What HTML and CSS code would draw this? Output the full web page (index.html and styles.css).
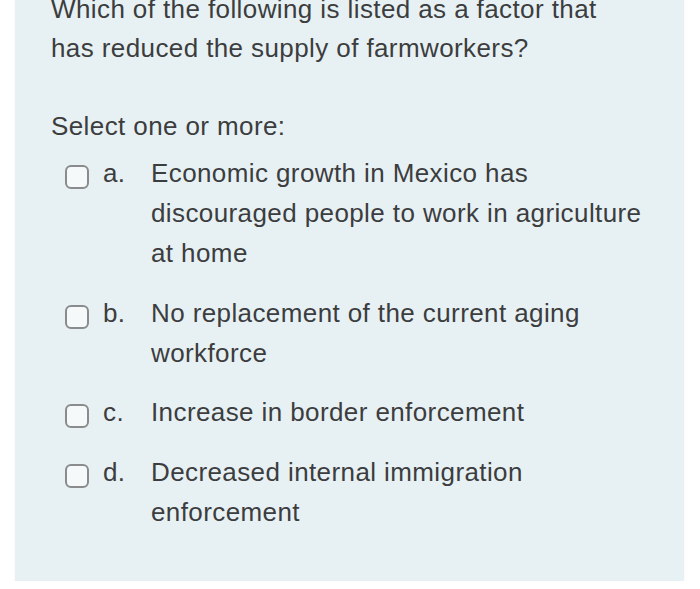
FILE: index.html
```html
<!DOCTYPE html>
<html>
<head>
<meta charset="utf-8">
<link rel="stylesheet" href="styles.css">
</head>
<body>
<div class="panel">
  <div class="question">Which of the following is listed as a factor that<br>has reduced the supply of farmworkers?</div>
  <div class="prompt">Select one or more:</div>
  <div class="options">
    <div class="option"><span class="box"></span><span class="letter">a.</span><span class="text">Economic growth in Mexico has discouraged people to work in agriculture at home</span></div>
    <div class="option"><span class="box"></span><span class="letter">b.</span><span class="text">No replacement of the current aging workforce</span></div>
    <div class="option"><span class="box"></span><span class="letter">c.</span><span class="text">Increase in border enforcement</span></div>
    <div class="option"><span class="box"></span><span class="letter">d.</span><span class="text">Decreased internal immigration enforcement</span></div>
  </div>
</div>
</body>
</html>
```
FILE: styles.css
```css
html, body { margin: 0; padding: 0; background: #ffffff; }
body {
  font-family: "Liberation Sans", Arial, sans-serif;
  color: #3c3d3e;
  font-size: 26px;
  letter-spacing: 0.4px;
}
.panel {
  margin: -20px 0 0 15px;
  width: 669px;
  background: #e7f1f4;
  padding: 10px 0 49px 36px;
  box-sizing: border-box;
  box-shadow: 0 1px 2px rgba(0,0,0,0.06);
}
.question { line-height: 39px; }
.prompt { line-height: 40px; margin-top: 38px; }
.options {
  display: flex;
  flex-direction: column;
  gap: 19.5px;
  margin-top: 7px;
  padding-left: 14px;
}
.option { display: flex; align-items: flex-start; line-height: 40px; }
.box {
  flex: none;
  width: 24px;
  height: 24px;
  box-sizing: border-box;
  border: 2.5px solid #8a8b8c;
  border-radius: 6px;
  background: #f6f9fa;
  margin-top: 12px;
}
.letter { flex: none; width: 48px; margin-left: 14px; }
.text { width: 500px; }
```
